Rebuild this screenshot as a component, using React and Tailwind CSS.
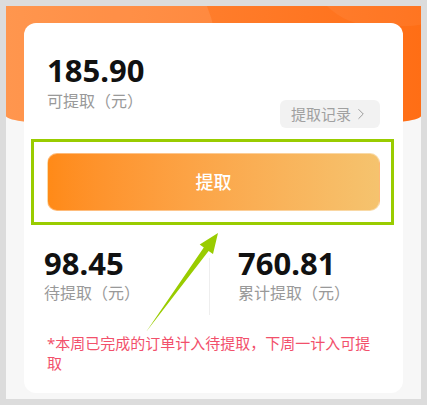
import { ChevronRight } from 'lucide-react';

const App = () => {
  return (
    <div
      className="relative w-[427px] h-[405px] bg-[#dcdcdc] p-[6px] overflow-hidden"
      style={{ fontFamily: '"Noto Sans", "Noto Sans CJK SC", sans-serif' }}
    >
      <div className="h-full bg-[#f7f7f7] overflow-hidden">
        {/* Orange header */}
        <div className="relative h-[124px] rounded-b-[50%_14px] bg-linear-to-r from-[#ff8a3a] to-[#ff6e15] overflow-hidden">
          <div className="absolute -left-[60px] -top-[70px] w-[270px] h-[230px] rounded-full bg-white/10"></div>
          <div className="absolute left-[300px] -top-[120px] w-[170px] h-[140px] rounded-full bg-white/5"></div>
        </div>

        {/* Card */}
        <div className="relative mx-[18px] -mt-[107px] rounded-[12px] bg-white px-[23px] pt-[29px] pb-[20px]">
          <div className="flex justify-between">
            <div>
              <div className="text-[31px] leading-[36px] font-bold text-[#111]">185.90</div>
              <div className="mt-[3px] text-[16px] leading-[20px] text-[#999]">可提取（元）</div>
            </div>
            <div className="mt-[48px] flex h-[28px] w-[100px] items-center rounded-[6px] bg-[#f2f2f2] pl-[11px] text-[15px] text-[#a0a0a0]">
              <span>提取记录</span>
              <ChevronRight size={18} strokeWidth={1.3} className="ml-[1px] text-[#999]" />
            </div>
          </div>

          <button className="mt-[25px] flex h-[58px] w-full items-center justify-center rounded-[10px] border border-white/40 bg-linear-to-r from-[#ff8a17] to-[#f5c36e] text-[18px] font-medium text-white">
            提取
          </button>

          <div className="-mx-[23px] mt-[34px] flex">
            <div className="flex-1 pl-[20px]">
              <div className="text-[31px] leading-[36px] font-bold text-[#111]">98.45</div>
              <div className="mt-[2px] text-[16px] leading-[20px] text-[#999]">待提取（元）</div>
            </div>
            <div className="mt-[13px] h-[57px] w-px bg-[#eeeeee]"></div>
            <div className="flex-1 pl-[28px]">
              <div className="text-[31px] leading-[36px] font-bold text-[#111]">760.81</div>
              <div className="mt-[2px] text-[16px] leading-[20px] text-[#999]">累计提取（元）</div>
            </div>
          </div>

          <p className="mt-[18px] text-[15px] leading-[20px] text-[#f2506b]">
            *本周已完成的订单计入待提取，下周一计入可提取
          </p>
        </div>
      </div>

      {/* Annotation overlay */}
      <div className="pointer-events-none absolute left-[31px] top-[139px] h-[86px] w-[363px] border-[3px] border-[#99cc00]"></div>
      <svg className="pointer-events-none absolute left-0 top-0" width="427" height="405" viewBox="0 0 427 405">
        <polygon
          points="218,233 213,254 208.6,251 146,332 203.8,247.4 199.7,244.5"
          fill="#99cc00"
        />
      </svg>
    </div>
  );
};

export default App;
